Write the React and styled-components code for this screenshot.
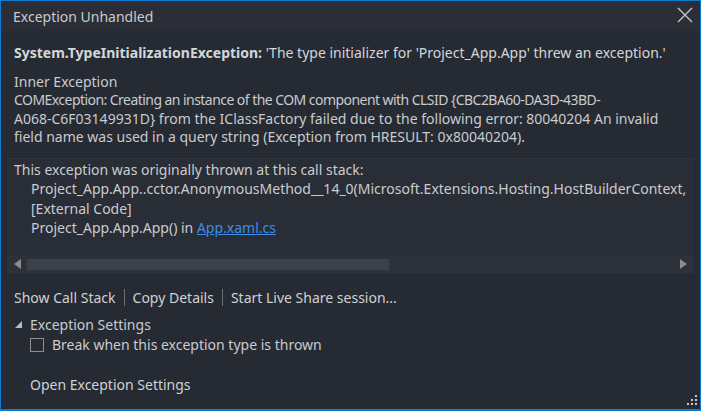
import React from "react";
import styled, { createGlobalStyle } from "styled-components";

const Global = createGlobalStyle`
  html, body { margin: 0; padding: 0; background: #262a33; }
  body { font-family: "Noto Sans", "Open Sans", sans-serif; }
  * { box-sizing: border-box; }
`;

const Window = styled.div`
  width: 701px;
  height: 411px;
  border: 1px solid #0e7bd0;
  border-bottom-width: 2px;
  background: #262a33;
  color: #c9cbcf;
  font-size: 14px;
  display: flex;
  flex-direction: column;
  position: relative;
  overflow: hidden;
`;

const TitleBar = styled.div`
  height: 30px;
  flex: none;
  background: #2b2e37;
  display: flex;
  align-items: center;
  justify-content: space-between;
  padding: 0 7px 0 12px;
  font-size: 14px;
  color: #c8cacd;
`;

const CloseButton = styled.button`
  width: 16px;
  height: 16px;
  border: none;
  background: transparent;
  padding: 0;
  margin-top: -2px;
  display: flex;
  align-items: center;
  justify-content: center;
  cursor: pointer;
`;

const Body = styled.div`
  padding: 13px 13px 0 13px;
  display: flex;
  flex-direction: column;
  flex: 1;
`;

const Line = styled.div`
  line-height: 18.5px;
  white-space: nowrap;
  letter-spacing: ${(p) => (p.$tight ? "-0.55px" : "normal")};
`;

const Headline = styled(Line)`
  color: #d4d6d9;
`;

const Bold = styled.b`
  font-weight: 700;
`;

const Section = styled.div`
  margin-top: ${(p) => p.$gap || 0}px;
`;

const StackBox = styled.div`
  margin: 11px -7px 0 -7px;
  background: #292d36;
  border-top: 1px solid #30343d;
  display: flex;
  flex-direction: column;
  overflow: hidden;
`;

const StackContent = styled.div`
  padding: 1px 7px 18px 7px;
`;

const StackLine = styled.div`
  line-height: 19.6px;
  white-space: nowrap;
  overflow: hidden;
  padding-left: ${(p) => (p.$indent ? 17 : 0)}px;
`;

const Link = styled.a`
  color: #3b8eea;
  text-decoration: underline;
  cursor: pointer;
`;

const ScrollBar = styled.div`
  height: 17px;
  background: #2d3139;
  display: flex;
  align-items: center;
  padding: 0 7px;
  gap: 6px;
`;

const ScrollTrack = styled.div`
  flex: 1;
  height: 11px;
  display: flex;
  align-items: center;
`;

const ScrollThumb = styled.div`
  height: 11px;
  background: #3c4048;
`;

const Arrow = styled.span`
  width: 0;
  height: 0;
  border-top: 5px solid transparent;
  border-bottom: 5px solid transparent;
  ${(p) =>
    p.$dir === "left"
      ? "border-right: 7px solid #8a8d92;"
      : "border-left: 7px solid #8a8d92;"}
`;

const Actions = styled.div`
  display: flex;
  align-items: center;
  margin-top: 16px;
  line-height: 18px;
`;

const Action = styled.span`
  color: #cfd1d4;
  cursor: pointer;
`;

const Divider = styled.span`
  width: 1px;
  height: 17px;
  background: #6b6e74;
  margin: 0 8px;
`;

const Expander = styled.div`
  display: flex;
  align-items: center;
  margin-top: 9px;
  line-height: 18px;
`;

const Triangle = styled.span`
  width: 0;
  height: 0;
  border-left: 7px solid transparent;
  border-bottom: 7px solid #b9bbbf;
  margin: 0 8px 0 1px;
`;

const CheckRow = styled.label`
  display: flex;
  align-items: center;
  margin: 2px 0 0 16px;
  line-height: 18px;
`;

const Box = styled.span`
  width: 14px;
  height: 14px;
  border: 1px solid #8d9095;
  margin-right: 8px;
  flex: none;
`;

const SettingsLink = styled.div`
  margin: 22px 0 0 16px;
  line-height: 18px;
  color: #cfd1d4;
  cursor: pointer;
`;

const Grip = styled.svg`
  position: absolute;
  right: 2px;
  bottom: 2px;
`;

export default function App() {
  return (
    <>
      <Global />
      <Window>
        <TitleBar>
          <span>Exception Unhandled</span>
          <CloseButton aria-label="Close">
            <svg width="16" height="16" viewBox="0 0 16 16">
              <path d="M1 1 L15 15 M15 1 L1 15" stroke="#c3c5c9" strokeWidth="1.4" fill="none" />
            </svg>
          </CloseButton>
        </TitleBar>
        <Body>
          <Headline>
            <Bold>System.TypeInitializationException:</Bold> 'The type initializer for 'Project_App.App' threw an exception.'
          </Headline>
          <Section $gap={10}>
            <Line>Inner Exception</Line>
            <Line $tight>COMException: Creating an instance of the COM component with CLSID {"{"}CBC2BA60-DA3D-43BD-</Line>
            <Line>A068-C6F03149931D{"}"} from the IClassFactory failed due to the following error: 80040204 An invalid</Line>
            <Line>field name was used in a query string (Exception from HRESULT: 0x80040204).</Line>
          </Section>
          <StackBox>
            <StackContent>
              <StackLine>This exception was originally thrown at this call stack:</StackLine>
              <StackLine $indent>Project_App.App..cctor.AnonymousMethod__14_0(Microsoft.Extensions.Hosting.HostBuilderContext,</StackLine>
              <StackLine $indent>[External Code]</StackLine>
              <StackLine $indent>
                Project_App.App.App() in <Link>App.xaml.cs</Link>
              </StackLine>
            </StackContent>
            <ScrollBar>
              <Arrow $dir="left" />
              <ScrollTrack>
                <ScrollThumb style={{ width: "56%" }} />
              </ScrollTrack>
              <Arrow $dir="right" />
            </ScrollBar>
          </StackBox>
          <Actions>
            <Action>Show Call Stack</Action>
            <Divider />
            <Action>Copy Details</Action>
            <Divider />
            <Action>Start Live Share session...</Action>
          </Actions>
          <Expander>
            <Triangle />
            <span>Exception Settings</span>
          </Expander>
          <CheckRow>
            <Box />
            <span>Break when this exception type is thrown</span>
          </CheckRow>
          <SettingsLink>Open Exception Settings</SettingsLink>
        </Body>
        <Grip width="13" height="13" viewBox="0 0 13 13">
          {[
            [10, 0],
            [10, 4], [6, 4],
            [10, 8], [6, 8], [2, 8],
          ].map(([x, y], i) => (
            <rect key={i} x={x} y={y + 1} width="2" height="2" fill="#c8cacd" />
          ))}
        </Grip>
      </Window>
    </>
  );
}
